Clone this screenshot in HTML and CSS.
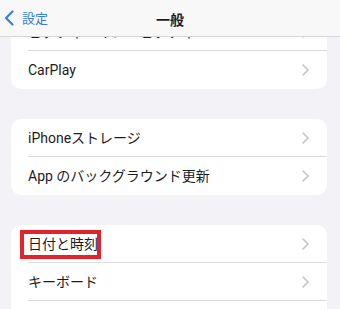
FILE: index.html
```html
<!DOCTYPE html>
<html lang="ja">
<head>
<meta charset="utf-8">
<link rel="stylesheet" href="styles.css">
</head>
<body>
<div class="screen">
  <header class="nav">
    <div class="back">
      <svg class="back-icon" width="10" height="16" viewBox="0 0 10 16"><polyline points="8.5,1.5 2,8 8.5,14.5" fill="none" stroke="#3a7de0" stroke-width="2.2" stroke-linecap="round" stroke-linejoin="round"/></svg>
      <span class="back-label">設定</span>
    </div>
    <div class="title">一般</div>
  </header>
  <main class="content">
    <section class="card first">
      <div class="row"><div class="row-inner"><span class="label">ピクチャ・イン・ピクチャ</span><svg class="chev" width="7" height="12" viewBox="0 0 7 12"><polyline points="1,1 6,6 1,11" fill="none" stroke="#c4c4c7" stroke-width="1.6" stroke-linecap="round" stroke-linejoin="round"/></svg></div></div>
      <div class="row"><div class="row-inner last"><span class="label">CarPlay</span><svg class="chev" width="7" height="12" viewBox="0 0 7 12"><polyline points="1,1 6,6 1,11" fill="none" stroke="#c4c4c7" stroke-width="1.6" stroke-linecap="round" stroke-linejoin="round"/></svg></div></div>
    </section>
    <section class="card">
      <div class="row"><div class="row-inner"><span class="label">iPhoneストレージ</span><svg class="chev" width="7" height="12" viewBox="0 0 7 12"><polyline points="1,1 6,6 1,11" fill="none" stroke="#c4c4c7" stroke-width="1.6" stroke-linecap="round" stroke-linejoin="round"/></svg></div></div>
      <div class="row"><div class="row-inner last"><span class="label">App のバックグラウンド更新</span><svg class="chev" width="7" height="12" viewBox="0 0 7 12"><polyline points="1,1 6,6 1,11" fill="none" stroke="#c4c4c7" stroke-width="1.6" stroke-linecap="round" stroke-linejoin="round"/></svg></div></div>
    </section>
    <section class="card">
      <div class="row"><div class="row-inner"><span class="label mark">日付と時刻</span><svg class="chev" width="7" height="12" viewBox="0 0 7 12"><polyline points="1,1 6,6 1,11" fill="none" stroke="#c4c4c7" stroke-width="1.6" stroke-linecap="round" stroke-linejoin="round"/></svg></div></div>
      <div class="row"><div class="row-inner"><span class="label">キーボード</span><svg class="chev" width="7" height="12" viewBox="0 0 7 12"><polyline points="1,1 6,6 1,11" fill="none" stroke="#c4c4c7" stroke-width="1.6" stroke-linecap="round" stroke-linejoin="round"/></svg></div></div>
      <div class="row"><div class="row-inner"></div></div>
    </section>
  </main>
</div>
</body>
</html>
```

FILE: styles.css
```css
* { box-sizing: border-box; }
html, body {
  margin: 0;
  padding: 0;
}
body {
  background: #f2f2f7;
  font-family: Roboto, "Noto Sans CJK JP", sans-serif;
  color: #1c1c1e;
}
.screen {
  width: 340px;
  height: 309px;
  overflow: hidden;
  display: flex;
  flex-direction: column;
}
.nav {
  flex: 0 0 37px;
  height: 37px;
  background: #f8f8f8;
  border-bottom: 1px solid #d6d6d8;
  position: relative;
  display: flex;
  align-items: center;
  justify-content: center;
  z-index: 2;
}
.back {
  position: absolute;
  left: 4px;
  top: 10px;
  display: flex;
  align-items: center;
  gap: 8px;
  color: #3a7de0;
}
.back-icon { display: block; }
.back-label {
  font-size: 13px;
  line-height: 16px;
  font-family: "Noto Sans CJK JP", sans-serif;
}
.title {
  font-size: 14px;
  font-weight: 700;
  font-family: "Noto Sans CJK JP", sans-serif;
  line-height: 18px;
  margin-top: 1px;
}
.content {
  flex: 1;
  overflow: hidden;
  display: flex;
  flex-direction: column;
  gap: 30px;
}
.card {
  margin: 0 13px 0 11px;
  background: #ffffff;
  border-radius: 10px;
  flex: 0 0 auto;
}
.card.first {
  margin-top: -24px;
}
.row {
  padding-left: 17px;
  height: 38px;
}
.row-inner {
  height: 38px;
  display: flex;
  align-items: center;
  justify-content: space-between;
  padding-right: 18px;
  border-bottom: 1px solid #dcdcde;
}
.row-inner.last { border-bottom: none; }
.label {
  font-size: 14px;
  line-height: 18px;
  display: inline-block;
  position: relative;
}
.chev { display: block; }
.mark::after {
  content: "";
  position: absolute;
  left: -8px;
  right: -3px;
  top: -5px;
  bottom: -6px;
  border: 4px solid #e3232b;
}
```
